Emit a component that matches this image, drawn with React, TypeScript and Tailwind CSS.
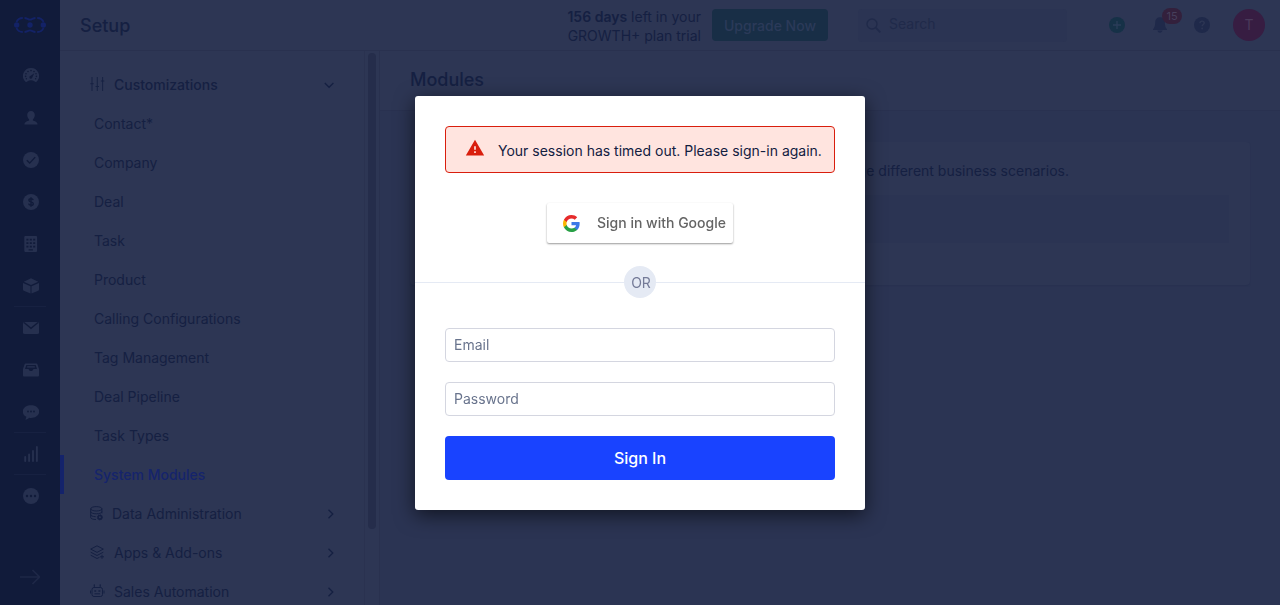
import type { ReactNode } from "react";

const BG = "#111b3a";
const PANEL = "#2d3654";

function RailGlyph({ children }: { children: ReactNode }) {
  return (
    <svg width="16" height="16" viewBox="0 0 16 16" fill="currentColor" aria-hidden="true">
      {children}
    </svg>
  );
}

const railItems: { label: string; divider?: boolean; icon: ReactNode }[] = [
  {
    label: "Dashboard",
    icon: (
      <RailGlyph>
        <path d="M8 0a8 8 0 0 0-6.6 12.6c.5.8 1.300 1.500 1.900 1.500.5 0 .8-.5 1.300-.8A6.500 6.500 0 0 1 8 12.300c1.300 0 2.500.4 3.400 1 .5.3.8.8 1.300.8.600 0 1.400-.7 1.900-1.500A8 8 0 0 0 8 0z" />
        <g fill={BG}>
          <circle cx="8" cy="2.600" r=".8" />
          <circle cx="5" cy="3.500" r=".8" />
          <circle cx="11" cy="3.500" r=".8" />
          <circle cx="3" cy="5.700" r=".8" />
          <circle cx="13" cy="5.700" r=".8" />
          <circle cx="2.600" cy="8.400" r=".8" />
          <circle cx="13.400" cy="8.400" r=".8" />
          <path d="M11.300 5.200 9.400 9.300A1.500 1.500 0 1 1 7.700 7.800z" />
          <circle cx="3.400" cy="10.800" r=".7" />
          <circle cx="12.600" cy="10.800" r=".7" />
        </g>
      </RailGlyph>
    ),
  },
  {
    label: "Contacts",
    icon: (
      <RailGlyph>
        <path d="M8 1C5.600 1 4.200 2.700 4.200 5c0 1.900.8 3.500 1.900 4.400v1.100c-1.700.7-4.500 1.300-4.700 4h13.200c-.2-2.700-3-3.300-4.700-4V9.400c1.100-.9 1.900-2.500 1.900-4.400 0-2.300-1.400-4-3.800-4z" />
      </RailGlyph>
    ),
  },
  {
    label: "Tasks",
    icon: (
      <RailGlyph>
        <circle cx="8" cy="8" r="8" />
        <path d="m3.800 8.200 2.900 2.900 5.500-6" fill="none" stroke={BG} strokeWidth="1.400" />
      </RailGlyph>
    ),
  },
  {
    label: "Deals",
    icon: (
      <RailGlyph>
        <circle cx="8" cy="8" r="8" />
        <path
          d="M10.200 6.100C10 5.200 9.200 4.700 8 4.700c-1.300 0-2.100.6-2.100 1.500 0 2.300 4.400 1 4.400 3.500 0 1-.9 1.600-2.300 1.600-1.400 0-2.200-.6-2.400-1.600M8 3.300v9.400"
          fill="none"
          stroke={BG}
          strokeWidth="1.400"
        />
      </RailGlyph>
    ),
  },
  {
    label: "Companies",
    icon: (
      <RailGlyph>
        <rect x="1.300" y="-.2" width="12.800" height="16.400" rx="1.600" />
        <path
          d="M3.400 2.800h2v1.700h-2zM6.800 2.800h2v1.700h-2zM10.200 2.800h2v1.700h-2zM3.400 6.300h2V8h-2zM6.800 6.300h2V8h-2zM10.200 6.300h2V8h-2zM3.400 9.800h2v1.700h-2zM6.800 9.800h2v1.700h-2zM10.200 9.800h2v1.700h-2zM5.600 13.300h4.300v1.100H5.600z"
          fill={BG}
        />
      </RailGlyph>
    ),
  },
  {
    label: "Products",
    divider: true,
    icon: (
      <RailGlyph>
        <path d="M8 .3 15.200 3.700 8 7.100.8 3.700zM0 5l7.500 3.300v7.300L.8 12.700A1.200 1.200 0 0 1 0 11.600zM16 5 8.500 8.300v7.300l6.700-2.900a1.200 1.200 0 0 0 .8-1.100z" />
      </RailGlyph>
    ),
  },
  {
    label: "Email",
    icon: (
      <RailGlyph>
        <rect x="0" y="2" width="16" height="12" rx="1.500" />
        <path d="m1 2.600 7 5.700 7-5.700" fill="none" stroke={BG} strokeWidth="1.300" />
      </RailGlyph>
    ),
  },
  {
    label: "Inbox",
    icon: (
      <RailGlyph>
        <path d="M2.600 1.500h10.800a1 1 0 0 1 1 .7L16 7v6.500a1 1 0 0 1-1 1H1a1 1 0 0 1-1-1V7l1.600-4.800a1 1 0 0 1 1-.7z" />
        <path d="M3.300 2.900h9.400l1.300 4.200h-3.600c-.3 1.400-1.200 2-2.400 2s-2.100-.6-2.400-2H2z" fill={BG} />
        <path d="M4.200 4.200h7.600v1.400H4.200z" />
      </RailGlyph>
    ),
  },
  {
    label: "Conversations",
    divider: true,
    icon: (
      <RailGlyph>
        <path d="M8 1.200c4.600 0 8.200 2.700 8.200 6.300s-3.600 6.400-8.200 6.400c-.7 0-1.300 0-1.900-.2-.9.900-2 1.700-3.900 1.900.7-.8 1.100-1.800 1.100-2.900C1.100 11.600-.2 9.700-.2 7.500-.2 3.900 3.400 1.200 8 1.200z" />
        <g fill={BG}>
          <circle cx="5" cy="7.500" r=".9" />
          <circle cx="8" cy="7.500" r=".9" />
          <circle cx="11" cy="7.500" r=".9" />
        </g>
      </RailGlyph>
    ),
  },
  {
    label: "Reports",
    divider: true,
    icon: (
      <RailGlyph>
        <path
          d="M2.200 15v-4M6.100 15V8.500M10 15V5M13.900 15V1"
          fill="none"
          stroke="currentColor"
          strokeWidth="1.900"
          strokeLinecap="round"
        />
      </RailGlyph>
    ),
  },
  {
    label: "More",
    icon: (
      <RailGlyph>
        <circle cx="8" cy="8" r="8" />
        <g fill={BG}>
          <circle cx="4" cy="8" r="1.200" />
          <circle cx="8" cy="8" r="1.200" />
          <circle cx="12" cy="8" r="1.200" />
        </g>
      </RailGlyph>
    ),
  },
];

function Rail() {
  return (
    <nav aria-label="Main" className="flex w-[60px] shrink-0 flex-col items-center bg-[#111b3a] text-[#26304f]">
      <a href="#home" aria-label="Home" className="mb-[5px] flex h-[50px] items-center text-[#132266]">
        <svg width="32" height="16" viewBox="0 0 32 16" fill="none" stroke="currentColor" strokeWidth="1.800" aria-hidden="true">
          <path d="M2.500 5C3.600 2.200 5.500 1 8.800 1M10.500 1c2.500 0 3.500 1.700 5.500 1.700S19 1 21.500 1M23.200 1c3.300 0 5.200 1.200 6.300 4M2.500 11c1.100 2.800 3 4 6.300 4M10.500 15c2.500 0 3.500-1.700 5.500-1.700S19 15 21.500 15M23.200 15c3.300 0 5.200-1.200 6.300-4" />
          <g fill="currentColor" stroke="none">
            <circle cx="2.700" cy="8" r="2.700" />
            <circle cx="16" cy="8" r="2.700" />
            <circle cx="29.300" cy="8" r="2.700" />
          </g>
        </svg>
      </a>
      {railItems.map((item) => (
        <a
          key={item.label}
          href="#"
          aria-label={item.label}
          className={`flex h-[42px] w-8 items-center justify-center border-b pl-0.5 ${item.divider ? "border-[#172141]" : "border-transparent"}`}
        >
          {item.icon}
        </a>
      ))}
      <button type="button" aria-label="Expand menu" className="mt-auto mb-4 flex h-6 items-center text-[#1e2847]">
        <svg width="20" height="16" viewBox="0 0 20 16" fill="none" stroke="currentColor" strokeWidth="1.700" aria-hidden="true">
          <path d="M0 8h19M12.500 1l7 7-7 7" />
        </svg>
      </button>
    </nav>
  );
}

function TopBar() {
  return (
    <header className="flex h-[51px] shrink-0 items-center border-b border-[#29314f] pr-[15px] pl-5">
      <h1 className="pt-0.5 text-lg font-medium">Setup</h1>
      <p className="ml-auto pt-0.5 text-right text-sm leading-[19px]">
        <strong className="font-semibold">156 days</strong> left in your
        <br />
        GROWTH+ plan trial
      </p>
      <button type="button" className="ml-[11px] h-8 w-[116px] rounded bg-[#182e46] pt-0.5 text-sm font-medium text-[#2b3a59]">
        Upgrade Now
      </button>
      <label className="ml-[30px] flex h-[33px] w-[209px] items-center gap-2 rounded bg-[#2b3453] pl-2 text-[#202a4a]">
        <svg width="15" height="15" viewBox="0 0 15 15" fill="none" stroke="currentColor" strokeWidth="1.400" className="shrink-0" aria-hidden="true">
          <circle cx="6" cy="6" r="5" />
          <path d="m9.700 9.700 4.600 4.600" strokeWidth="1.800" />
        </svg>
        <input
          type="search"
          aria-label="Search"
          placeholder="Search"
          className="w-full bg-transparent pb-0.5 text-sm outline-none placeholder:text-[#202a4a]"
        />
      </label>
      <button type="button" aria-label="Add" className="ml-[42px]">
        <svg width="16" height="16" viewBox="0 0 16 16" aria-hidden="true">
          <circle cx="8" cy="8" r="8" fill="#163147" />
          <path d="M8 4v8M4 8h8" stroke="#2b3d59" strokeWidth="1.300" />
        </svg>
      </button>
      <button type="button" aria-label="Notifications" className="relative ml-[27px]">
        <svg width="16" height="16" viewBox="0 0 16 16" fill="#1f294a" aria-hidden="true">
          <path d="M8 .3c-3 0-4.800 2-4.800 5 0 3.500-.7 5.200-2.200 7V13h14v-.7c-1.500-1.800-2.200-3.500-2.200-7 0-3-1.800-5-4.800-5zM5.500 13.600h5c-.3 1.400-1.200 2.200-2.500 2.200s-2.200-.8-2.500-2.200z" />
        </svg>
        <span className="absolute -top-[9px] left-[10px] flex h-4 w-5 items-center justify-center rounded-full bg-[#33203c] text-[11px] text-[#463f5b]">
          15
        </span>
      </button>
      <button type="button" aria-label="Help" className="ml-[26px]">
        <svg width="16" height="16" viewBox="0 0 16 16" aria-hidden="true">
          <circle cx="8" cy="8" r="8" fill="#1f294a" />
          <path d="M5.900 6.300c0-1.400.9-2.200 2.200-2.200 1.200 0 2.100.8 2.100 1.900 0 1.500-2.100 1.600-2.100 3.300" fill="none" stroke={PANEL} strokeWidth="1.400" />
          <circle cx="8.100" cy="11.500" r=".9" fill={PANEL} />
        </svg>
      </button>
      <button type="button" aria-label="Account" className="ml-[23px] size-8 rounded-full bg-[#371d42] text-sm text-[#4a3a5a]">
        T
      </button>
    </header>
  );
}

function Chevron({ down }: { down?: boolean }) {
  return (
    <svg
      width="12"
      height="12"
      viewBox="0 0 12 12"
      fill="none"
      stroke="currentColor"
      strokeWidth="1.300"
      className="mr-7 ml-auto"
      aria-hidden="true"
    >
      <path d={down ? "M.8 4l4.300 4.300L9.400 4" : "M4.500 1.700 8.800 6l-4.300 4.300"} />
    </svg>
  );
}

const moduleLinks = [
  "Contact*",
  "Company",
  "Deal",
  "Task",
  "Product",
  "Calling Configurations",
  "Tag Management",
  "Deal Pipeline",
  "Task Types",
];

function GroupIcon({ children }: { children: ReactNode }) {
  return (
    <svg width="15" height="15" viewBox="0 0 15 15" fill="none" stroke="currentColor" strokeWidth="1" aria-hidden="true">
      {children}
    </svg>
  );
}

const groups: { label: string; gap: string; icon: ReactNode }[] = [
  {
    label: "Data Administration",
    gap: "gap-[7px]",
    icon: (
      <GroupIcon>
        <ellipse cx="6.300" cy="2.800" rx="5.600" ry="2.200" />
        <path d="M.7 2.800v8.700c0 1.200 2.300 2 5.300 2M11.900 2.800v4.500M.7 5.700c0 1.200 2.500 2.100 5.600 2.100s5.600-.9 5.600-2.100M.7 8.600c0 1.200 2 2 5 2.100" />
        <circle cx="9.900" cy="11.300" r="1.800" strokeWidth="1.600" />
        <circle cx="9.900" cy="11.300" r="2.600" strokeWidth=".8" strokeDasharray="1 1" />
      </GroupIcon>
    ),
  },
  {
    label: "Apps & Add-ons",
    gap: "gap-[9px]",
    icon: (
      <GroupIcon>
        <path d="m7 .8 6.300 3.300L7 7.400.7 4.100zM.7 7.200 7 10.500l6.300-3.300M.7 10.200 7 13.500l2.500-1.200M12 9.800v4M10 11.800h4" />
      </GroupIcon>
    ),
  },
  {
    label: "Sales Automation",
    gap: "gap-[9px]",
    icon: (
      <GroupIcon>
        <rect x="2" y="3.500" width="10.500" height="9" rx="2" />
        <path d="M4.300 3.500V1.200M10.200 3.500V1.200M.5 6.500v3M14 6.500v3M4.500 9.800h5.500" />
        <path d="M4.300 7h1.900M8.400 7h1.900M3.800 1h1M9.700 1h1" strokeWidth="1.400" />
      </GroupIcon>
    ),
  },
];

function Sidebar() {
  return (
    <aside className="flex w-80 shrink-0 overflow-hidden border-r border-[#29314f] text-sm">
      <div className="flex w-[305px] shrink-0 flex-col border-r border-[#2a3250] pt-[14px]">
        <button type="button" className="flex h-[39px] shrink-0 items-center gap-[9px] pl-[30px] font-medium">
          <GroupIcon>
            <path
              d="M2 0v14M7.300 0v14M12.600 0v14M.3 6.700h3.400M5.600 9.500h3.400M10.900 4h3.400"
              strokeWidth=".9"
            />
          </GroupIcon>
          Customizations
          <Chevron down />
        </button>
        {moduleLinks.map((label) => (
          <a key={label} href="#" className="flex h-[39px] shrink-0 items-center pl-[34px]">
            {label}
          </a>
        ))}
        <a
          href="#"
          aria-current="page"
          className="flex h-[39px] shrink-0 items-center border-l-4 border-[#14236b] pl-[30px] font-medium text-[#15246c]"
        >
          System Modules
        </a>
        {groups.map((group) => (
          <button key={group.label} type="button" className={`flex h-[39px] shrink-0 items-center pl-[30px] ${group.gap}`}>
            {group.icon}
            {group.label}
            <Chevron />
          </button>
        ))}
      </div>
      <div className="flex-1 px-[3px] pt-0.5">
        <div className="h-[476px] w-2 rounded-full bg-[#252d4b]" />
      </div>
    </aside>
  );
}

function ModulesPage() {
  return (
    <main className="flex flex-1 flex-col bg-[#2b3453]">
      <div className="flex h-[60px] items-center border-b border-[#293150] bg-[#2d3654] pb-0.5 pl-[30px]">
        <h2 className="text-lg font-medium">Modules</h2>
      </div>
      <section className="mx-[30px] mt-[31px] rounded bg-[#2d3654] px-[21px] pt-[19px] pb-[42px] shadow-[0_1px_1px_#283150]">
        <p className="max-w-[638px] text-right text-sm">
          Modules help you organise and manage different business scenarios.
        </p>
        <div className="mt-[14px] h-12 bg-[#2b3453]" />
      </section>
    </main>
  );
}

function GoogleLogo() {
  return (
    <svg width="17" height="17" viewBox="0 0 18 18" aria-hidden="true">
      <path fill="#3B78E7" d="M17.640 9.205c0-.639-.057-1.252-.164-1.841H9v3.481h4.844a4.140 4.140 0 0 1-1.796 2.716v2.259h2.908c1.702-1.567 2.684-3.875 2.684-6.615z" />
      <path fill="#28A046" d="M9 18c2.430 0 4.467-.806 5.956-2.180l-2.908-2.259c-.806.540-1.837.860-3.048.860-2.344 0-4.328-1.584-5.036-3.711H.957v2.332A8.997 8.997 0 0 0 9 18z" />
      <path fill="#FBB500" d="M3.964 10.710A5.410 5.410 0 0 1 3.682 9c0-.593.102-1.170.282-1.710V4.958H.957A8.996 8.996 0 0 0 0 9c0 1.452.348 2.827.957 4.042l3.007-2.332z" />
      <path fill="#E62B2B" d="M9 3.580c1.321 0 2.508.454 3.440 1.345l2.582-2.580C13.463.891 11.426 0 9 0A8.997 8.997 0 0 0 .957 4.958L3.964 7.290C4.672 5.163 6.656 3.580 9 3.580z" />
    </svg>
  );
}

function SignInDialog() {
  return (
    <div className="fixed inset-0 flex justify-center pt-24">
      <div
        role="dialog"
        aria-modal="true"
        aria-label="Sign in"
        className="w-[450px] self-start rounded-[3px] bg-white py-[30px] shadow-[0_5px_20px_rgba(0,0,0,0.6)]"
      >
        <div
          role="alert"
          className="mx-[30px] flex h-[47px] items-center rounded border border-[#d91e0d] bg-[#ffe4df] pl-[19px] text-sm text-[#12203f]"
        >
          <svg width="20" height="20" viewBox="0 0 24 24" fill="#d91e0d" className="mb-[3px]" aria-hidden="true">
            <path d="M1 21h22L12 2 1 21zm12-3h-2v-2h2v2zm0-4h-2v-4h2v4z" />
          </svg>
          <span className="ml-[13px] pt-[3px]">Your session has timed out. Please sign-in again.</span>
        </div>
        <button
          type="button"
          className="mx-auto mt-[30px] flex h-10 w-[186px] items-center rounded-[2px] bg-white pl-4 text-sm font-medium text-[#646464] shadow-[0_1px_2px_rgba(0,0,0,0.4)]"
        >
          <GoogleLogo />
          <span className="ml-[17px] whitespace-nowrap">Sign in with Google</span>
        </button>
        <div className="mt-[23px] flex items-center">
          <span className="h-px flex-1 bg-[#e5eaf4]" />
          <span className="flex size-8 items-center justify-center rounded-full bg-[#e5eaf4] pt-0.5 pl-0.5 text-sm text-[#757b98]">OR</span>
          <span className="h-px flex-1 bg-[#e5eaf4]" />
        </div>
        <form className="mx-[30px] mt-[30px] flex flex-col gap-5" onSubmit={(event) => event.preventDefault()}>
          <input
            type="email"
            aria-label="Email"
            placeholder="Email"
            className="h-[34px] rounded border border-[#d4d6e0] px-2 pb-0.5 text-sm outline-none placeholder:text-[#69748d]"
          />
          <input
            type="password"
            aria-label="Password"
            placeholder="Password"
            className="h-[34px] rounded border border-[#d4d6e0] px-2 pb-0.5 text-sm outline-none placeholder:text-[#69748d]"
          />
          <button type="submit" className="h-11 rounded bg-[#1943ff] text-base font-medium text-white">
            Sign In
          </button>
        </form>
      </div>
    </div>
  );
}

export default function App() {
  return (
    <div className="flex h-screen overflow-hidden bg-[#2d3654] font-['Inter',sans-serif] text-[#152042]">
      <Rail />
      <div className="flex min-w-0 flex-1 flex-col">
        <TopBar />
        <div className="flex min-h-0 flex-1">
          <Sidebar />
          <ModulesPage />
        </div>
      </div>
      <SignInDialog />
    </div>
  );
}
